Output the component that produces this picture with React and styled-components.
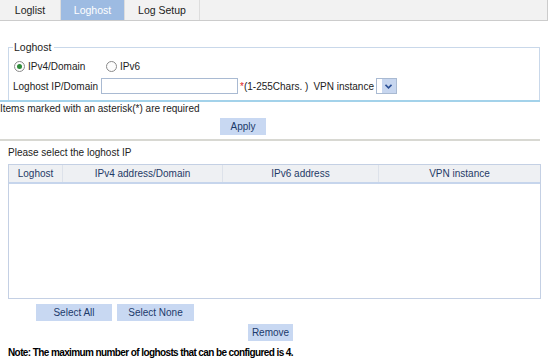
import React, { useState } from "react";
import styled, { createGlobalStyle } from "styled-components";

const GlobalStyle = createGlobalStyle`
  body {
    margin: 0;
    background: #ffffff;
    font-family: "Liberation Sans", Arial, sans-serif;
    font-size: 10px;
    line-height: 13px;
    color: #000000;
  }
`;

const Page = styled.div`
  width: 549px;
  height: 364px;
  overflow: hidden;
`;

const TabBar = styled.div`
  display: flex;
  width: 547px;
  height: 20px;
  background: #f2f2f2;
  border-bottom: 1px solid #cccccc;
  border-right: 1px solid #cccccc;
  font-size: 10.5px;
`;

const Tab = styled.div`
  width: ${(p) => p.$w}px;
  display: flex;
  align-items: center;
  justify-content: center;
  color: ${(p) => (p.$active ? "#ffffff" : "#222222")};
  background: ${(p) => (p.$active ? "#9dbbe2" : "transparent")};
  border-right: 1px solid #dddddd;
`;

const Content = styled.div`
  width: 540px;
  padding-top: 20px;
`;

const FieldWrap = styled.div`
  border-bottom: 2px solid #a3d2ea;
  padding-left: 8px;
`;

const Fieldset = styled.fieldset`
  margin: 0;
  padding: 4px 0 3px 4px;
  border: 1px solid #c9d8ea;
  border-bottom: none;
  min-width: 0;
`;

const Legend = styled.legend`
  padding: 0 3px 0 1px;
  margin-left: 0;
  font-size: 10.5px;
  color: #222222;
`;

const Row = styled.div`
  display: flex;
  align-items: center;
  height: ${(p) => p.$h || 20}px;
  white-space: nowrap;
`;

const RadioLabel = styled.label`
  display: flex;
  align-items: center;
  width: ${(p) => (p.$w ? `${p.$w}px` : "auto")};
  color: #222222;
`;

const RadioDot = styled.span`
  width: 9px;
  height: 9px;
  margin-left: 1px;
  border: 1px solid #8a8a8a;
  border-radius: 50%;
  margin-right: 3px;
  display: flex;
  align-items: center;
  justify-content: center;
  background: #fdfdfd;
  &::after {
    content: "";
    width: 5px;
    height: 5px;
    border-radius: 50%;
    background: ${(p) => (p.$on ? "#2e8b3a" : "transparent")};
  }
`;

const FieldLabel = styled.span`
  width: 88px;
  color: #222222;
`;

const TextInput = styled.input`
  box-sizing: border-box;
  width: 137px;
  height: 16px;
  border: 1px solid #a9bad2;
  padding: 0 3px;
  margin: 0;
  font: inherit;
`;

const Hint = styled.span`
  margin-left: 2px;
  color: #222222;
  & b {
    color: #e02020;
    font-weight: normal;
  }
`;

const VpnLabel = styled.span`
  margin-left: 5px;
  margin-right: 2px;
  color: #222222;
`;

const SelectBox = styled.div`
  box-sizing: border-box;
  width: 21px;
  height: 16px;
  border: 1px solid #a9bad2;
  display: flex;
  justify-content: flex-end;
  background: #ffffff;
`;

const SelectArrow = styled.div`
  width: 14px;
  background: #c7d6ef;
  display: flex;
  align-items: center;
  justify-content: center;
`;

const Required = styled.div`
  height: 13px;
  color: #222222;
`;

const ButtonRow = styled.div`
  display: flex;
  gap: 5px;
  padding-left: ${(p) => p.$pl || 0}px;
  margin-top: ${(p) => p.$mt || 0}px;
`;

const Button = styled.div`
  width: ${(p) => p.$w}px;
  height: 17px;
  background: #c8d8f2;
  color: #1c3a6a;
  display: flex;
  align-items: center;
  justify-content: center;
`;

const Divider = styled.div`
  height: 2px;
  background: #d8d8d2;
  margin-top: 4px;
`;

const Caption = styled.div`
  padding: 5px 0 0 8px;
  height: 13px;
  color: #222222;
`;

const Table = styled.div`
  margin: 5px 0 0 8px;
  width: 531px;
  height: 133px;
  border: 1px solid #c4d0e4;
  display: flex;
  flex-direction: column;
`;

const HeadRow = styled.div`
  display: grid;
  grid-template-columns: 53px 160px 156px 1fr;
  height: 17px;
  background: #eef0f3;
  border-bottom: 2px solid #c6d5ec;
`;

const HeadCell = styled.div`
  display: flex;
  align-items: center;
  justify-content: center;
  color: #1f3a66;
  border-left: ${(p) => (p.$first ? "none" : "1px solid #dde2ea")};
`;

const Note = styled.div`
  font-weight: bold;
  font-size: 10px;
  letter-spacing: -0.6px;
  padding: 5px 0 0 8px;
  white-space: nowrap;
`;

export default function App() {
  const [mode, setMode] = useState("v4");
  return (
    <Page>
      <GlobalStyle />
      <TabBar>
        <Tab $w={60}>Loglist</Tab>
        <Tab $w={63} $active>
          Loghost
        </Tab>
        <Tab $w={74}>Log Setup</Tab>
      </TabBar>
      <Content>
        <FieldWrap>
          <Fieldset>
            <Legend>Loghost</Legend>
            <Row $h={17}>
              <RadioLabel $w={92} onClick={() => setMode("v4")}>
                <RadioDot $on={mode === "v4"} />
                IPv4/Domain
              </RadioLabel>
              <RadioLabel onClick={() => setMode("v6")}>
                <RadioDot $on={mode === "v6"} />
                IPv6
              </RadioLabel>
            </Row>
            <Row $h={22}>
              <FieldLabel>Loghost IP/Domain</FieldLabel>
              <TextInput />
              <Hint>
                <b>*</b>(1-255Chars. )
              </Hint>
              <VpnLabel>VPN instance</VpnLabel>
              <SelectBox>
                <SelectArrow>
                  <svg width="7" height="5" viewBox="0 0 7 5">
                    <path d="M0.5 0.8 L3.5 3.8 L6.5 0.8" stroke="#2b4f95" strokeWidth="1.6" fill="none" />
                  </svg>
                </SelectArrow>
              </SelectBox>
            </Row>
          </Fieldset>
        </FieldWrap>
        <Required>Items marked with an asterisk(*) are required</Required>
        <ButtonRow $pl={220} $mt={3}>
          <Button $w={46}>Apply</Button>
        </ButtonRow>
        <Divider />
        <Caption>Please select the loghost IP</Caption>
        <Table>
          <HeadRow>
            <HeadCell $first>Loghost</HeadCell>
            <HeadCell>IPv4 address/Domain</HeadCell>
            <HeadCell>IPv6 address</HeadCell>
            <HeadCell>VPN instance</HeadCell>
          </HeadRow>
        </Table>
        <ButtonRow $pl={36} $mt={5}>
          <Button $w={76}>Select All</Button>
          <Button $w={77}>Select None</Button>
        </ButtonRow>
        <ButtonRow $pl={248} $mt={3}>
          <Button $w={45}>Remove</Button>
        </ButtonRow>
        <Note>Note: The maximum number of loghosts that can be configured is 4.</Note>
      </Content>
    </Page>
  );
}
